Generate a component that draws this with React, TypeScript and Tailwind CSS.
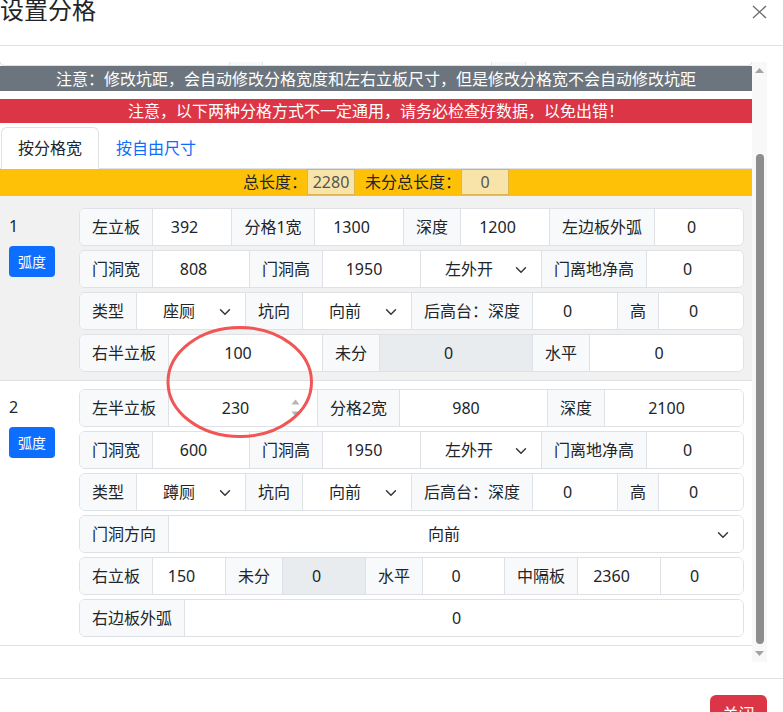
import React from 'react';

type Kind = 'label' | 'input' | 'disabled' | 'select' | 'spin';

interface Cell {
  k: Kind;
  t: string;
  w?: string;
}

const ROWS_1: Cell[][] = [
  [
    { k: 'label', t: '左立板', w: 'w-[72px]' },
    { k: 'input', t: '392', w: 'w-[79px]' },
    { k: 'label', t: '分格1宽', w: 'w-[83px]' },
    { k: 'input', t: '1300', w: 'w-[89px]' },
    { k: 'label', t: '深度', w: 'w-[57px]' },
    { k: 'input', t: '1200', w: 'w-[89px]' },
    { k: 'label', t: '左边板外弧', w: 'w-[105px]' },
    { k: 'input', t: '0' },
  ],
  [
    { k: 'label', t: '门洞宽', w: 'w-[72px]' },
    { k: 'input', t: '808', w: 'w-[97px]' },
    { k: 'label', t: '门洞高', w: 'w-[73px]' },
    { k: 'input', t: '1950', w: 'w-[98px]' },
    { k: 'select', t: '左外开', w: 'w-[121px]' },
    { k: 'label', t: '门离地净高', w: 'w-[105px]' },
    { k: 'input', t: '0' },
  ],
  [
    { k: 'label', t: '类型', w: 'w-[56px]' },
    { k: 'select', t: '座厕', w: 'w-[109px]' },
    { k: 'label', t: '坑向', w: 'w-[57px]' },
    { k: 'select', t: '向前', w: 'w-[109px]' },
    { k: 'label', t: '后高台：深度', w: 'w-[121px]' },
    { k: 'input', t: '0', w: 'w-[85px]' },
    { k: 'label', t: '高', w: 'w-[41px]' },
    { k: 'input', t: '0' },
  ],
  [
    { k: 'label', t: '右半立板', w: 'w-[88px]' },
    { k: 'input', t: '100', w: 'w-[154px]' },
    { k: 'label', t: '未分', w: 'w-[57px]' },
    { k: 'disabled', t: '0', w: 'w-[153px]' },
    { k: 'label', t: '水平', w: 'w-[57px]' },
    { k: 'input', t: '0' },
  ],
];

const ROWS_2: Cell[][] = [
  [
    { k: 'label', t: '左半立板', w: 'w-[88px]' },
    { k: 'spin', t: '230', w: 'w-[149px]' },
    { k: 'label', t: '分格2宽', w: 'w-[82px]' },
    { k: 'input', t: '980', w: 'w-[148px]' },
    { k: 'label', t: '深度', w: 'w-[57px]' },
    { k: 'input', t: '2100' },
  ],
  [
    { k: 'label', t: '门洞宽', w: 'w-[72px]' },
    { k: 'input', t: '600', w: 'w-[97px]' },
    { k: 'label', t: '门洞高', w: 'w-[73px]' },
    { k: 'input', t: '1950', w: 'w-[98px]' },
    { k: 'select', t: '左外开', w: 'w-[121px]' },
    { k: 'label', t: '门离地净高', w: 'w-[105px]' },
    { k: 'input', t: '0' },
  ],
  [
    { k: 'label', t: '类型', w: 'w-[56px]' },
    { k: 'select', t: '蹲厕', w: 'w-[109px]' },
    { k: 'label', t: '坑向', w: 'w-[57px]' },
    { k: 'select', t: '向前', w: 'w-[109px]' },
    { k: 'label', t: '后高台：深度', w: 'w-[121px]' },
    { k: 'input', t: '0', w: 'w-[85px]' },
    { k: 'label', t: '高', w: 'w-[41px]' },
    { k: 'input', t: '0' },
  ],
  [
    { k: 'label', t: '门洞方向', w: 'w-[88px]' },
    { k: 'select', t: '向前' },
  ],
  [
    { k: 'label', t: '右立板', w: 'w-[72px]' },
    { k: 'input', t: '150', w: 'w-[73px]' },
    { k: 'label', t: '未分', w: 'w-[57px]' },
    { k: 'disabled', t: '0', w: 'w-[83px]' },
    { k: 'label', t: '水平', w: 'w-[57px]' },
    { k: 'input', t: '0', w: 'w-[82px]' },
    { k: 'label', t: '中隔板', w: 'w-[73px]' },
    { k: 'input', t: '2360', w: 'w-[83px]' },
    { k: 'input', t: '0' },
  ],
  [
    { k: 'label', t: '右边板外弧', w: 'w-[104px]' },
    { k: 'input', t: '0' },
  ],
];

const Chevron = () => (
  <svg width="16" height="12" viewBox="0 0 16 16" fill="none" className="absolute right-[12px] top-[13px]">
    <path d="m2 5 6 6 6-6" stroke="#343a40" strokeWidth="2" strokeLinecap="round" strokeLinejoin="round" />
  </svg>
);

const CellView = ({ c, first }: { c: Cell; first: boolean }) => {
  const size = c.w ? `${c.w} shrink-0` : 'flex-1 min-w-0';
  const edge = first ? '' : 'border-l border-[#dee2e6]';
  const base = `${size} ${edge} relative flex items-center justify-center whitespace-nowrap`;

  if (c.k === 'label') {
    return <div className={`${base} bg-[#f8f9fa] px-[12px]`}>{c.t}</div>;
  }
  if (c.k === 'select') {
    return (
      <div className={`${base} bg-white pl-[12px] pr-[36px]`}>
        {c.t}
        <Chevron />
      </div>
    );
  }
  const bg = c.k === 'disabled' ? 'bg-[#e9ecef]' : 'bg-white';
  return (
    <div className={`${base} ${bg} pl-[12px] pr-[27px]`}>
      {c.t}
      {c.k === 'spin' && (
        <svg width="9" height="19" viewBox="0 0 9 19" className="absolute right-[17px] top-[9px]">
          <path d="M4.5 0.5 L8.5 5.5 L0.5 5.5 Z" fill="#b5b5b5" />
          <path d="M0.5 12.5 L8.5 12.5 L4.5 17.5 Z" fill="#b5b5b5" />
        </svg>
      )}
    </div>
  );
};

const Row = ({ cells }: { cells: Cell[] }) => (
  <div className="flex h-[38px] overflow-hidden rounded-[6px] border border-[#dee2e6] bg-white">
    {cells.map((c, i) => (
      <CellView key={i} c={c} first={i === 0} />
    ))}
  </div>
);

// one 分格 block: number + 弧度 button on the left, input-group rows on the right
const Group = ({ n, rows, className }: { n: string; rows: Cell[][]; className: string }) => (
  <div className={`flex border-b border-[#dee2e6] pb-[8px] ${className}`}>
    <div className="w-[79px] shrink-0 pl-[9px]">
      <div className="mt-[6px] leading-6">{n}</div>
      <button className="mt-[8px] flex h-[31px] w-[46px] items-center justify-center rounded-[4px] bg-[#0d6efd] text-[14px] text-white">
        弧度
      </button>
    </div>
    <div className="flex flex-1 flex-col gap-[4px] pr-[8px]">
      {rows.map((r, i) => (
        <Row key={i} cells={r} />
      ))}
    </div>
  </div>
);

const Scrollbar = () => (
  <div className="flex h-[600px] w-[15px] shrink-0 flex-col items-center bg-[#f8f8f8]">
    <svg width="9" height="5" viewBox="0 0 9 5" className="mt-[6px]">
      <path d="M4.5 0 L9 5 L0 5 Z" fill="#a3a3a3" />
    </svg>
    <div className="mt-[81px] h-[490px] w-[8px] rounded-full bg-[#8d8d8d]" />
    <svg width="9" height="5" viewBox="0 0 9 5" className="mt-[7px]">
      <path d="M0 0 L9 0 L4.5 5 Z" fill="#a3a3a3" />
    </svg>
  </div>
);

export default function App() {
  return (
    <div className="relative h-[712px] w-[783px] overflow-hidden bg-white font-['Noto_Sans','Noto_Sans_CJK_SC',sans-serif] text-[16px] leading-6 text-[#212529]">
      {/* header */}
      <div className="flex h-[46px] items-start justify-between border-b border-[#dee2e6]">
        <div className="mt-[-2px] text-[24px] leading-[24px]">设置分格</div>
        <svg width="15" height="14" viewBox="0 0 15 14" className="mr-[16px] mt-[5px]">
          <path d="M1 1 L14 13 M14 1 L1 13" stroke="#6f6f6f" strokeWidth="1.4" />
        </svg>
      </div>

      {/* body */}
      <div className="flex pb-[16px] pr-[16px] pt-[16px]">
        <div className="h-[600px] w-[752px] overflow-hidden">
          <div className="flex h-[4px] overflow-hidden rounded-b-[6px] border-x border-b border-[#dee2e6]">
            <div className="w-[228px]" />
            <div className="w-[34px] border-x border-[#dee2e6] bg-[#f8f9fa]" />
            <div className="w-[228px]" />
            <div className="w-[35px] border-x border-[#dee2e6] bg-[#f8f9fa]" />
            <div className="flex-1" />
          </div>

          <div className="flex h-[25px] items-center justify-center bg-[#6c757d] text-white">
            注意：修改坑距，会自动修改分格宽度和左右立板尺寸，但是修改分格宽不会自动修改坑距
          </div>
          <div className="mt-[8px] flex h-[24px] items-center justify-center bg-[#dc3545] text-white">
            注意，以下两种分格方式不一定通用，请务必检查好数据，以免出错！
          </div>

          <div className="mt-[4px] flex border-b border-[#dee2e6] pl-[1px]">
            <div className="-mb-px flex h-[42px] items-center rounded-t-[6px] border border-[#dee2e6] border-b-white bg-white px-[16px]">
              按分格宽
            </div>
            <div className="flex h-[41px] items-center px-[17px] text-[#0d6efd]">按自由尺寸</div>
          </div>

          <div className="flex h-[27px] items-start justify-center bg-[#ffc107]">
            <span className="leading-[26px]">总长度：</span>
            <div className="flex h-[26px] w-[48px] items-center justify-center border border-[#dcb54c] bg-[#f8e4a8] text-[#555]">
              2280
            </div>
            <span className="ml-[10px] leading-[26px]">未分总长度：</span>
            <div className="flex h-[26px] w-[48px] items-center justify-center border border-[#dcb54c] bg-[#f8e4a8] text-[#555]">
              0
            </div>
          </div>

          <Group n="1" rows={ROWS_1} className="bg-[#f1f1f1] pt-[12px]" />
          <Group n="2" rows={ROWS_2} className="bg-white pt-[8px]" />
        </div>
        <Scrollbar />
      </div>

      {/* footer */}
      <div className="flex justify-end border-t border-[#dee2e6] pr-[16px] pt-[16px]">
        <button className="flex h-[38px] w-[57px] items-start justify-center rounded-[6px] bg-[#dc3545] pt-[7px] text-white">
          关闭
        </button>
      </div>

      {/* hand-drawn annotation */}
      <svg width="150" height="117" viewBox="0 0 150 117" className="pointer-events-none absolute left-[165px] top-[324px]">
        <ellipse cx="74.75" cy="58" rx="71.75" ry="54.5" fill="none" stroke="#f05656" strokeWidth="3" />
      </svg>
    </div>
  );
}
